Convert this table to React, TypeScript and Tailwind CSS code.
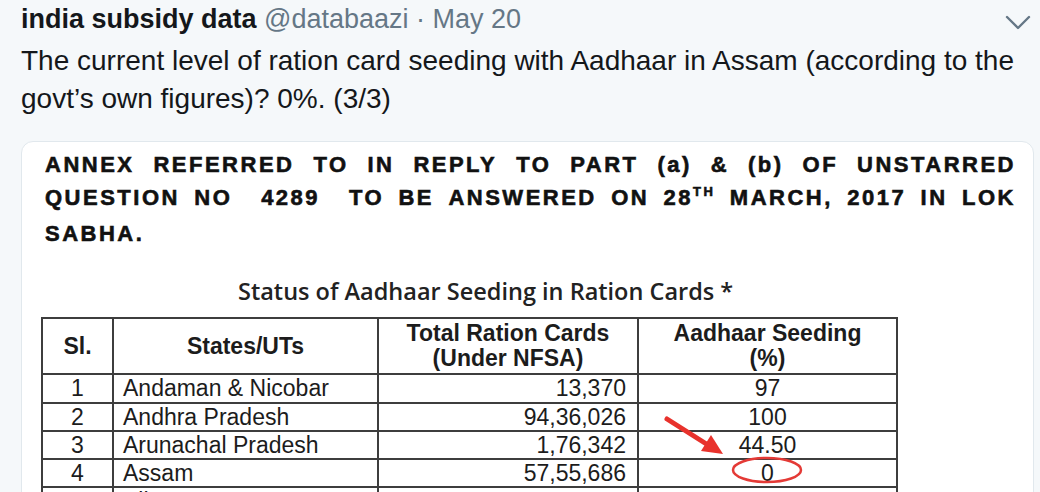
import React from 'react';

const annexLines = [
  ['ANNEX', 'REFERRED', 'TO', 'IN', 'REPLY', 'TO', 'PART', '(a)', '&', '(b)', 'OF', 'UNSTARRED'],
  ['QUESTION', 'NO', '', '4289', '', 'TO', 'BE', 'ANSWERED', 'ON', '28TH', 'MARCH,', '2017', 'IN', 'LOK'],
];

const rows = [
  { sl: '1', state: 'Andaman & Nicobar', total: '13,370', seed: '97', h: 'h-[29px]' },
  { sl: '2', state: 'Andhra Pradesh', total: '94,36,026', seed: '100', h: 'h-[28px]' },
  { sl: '3', state: 'Arunachal Pradesh', total: '1,76,342', seed: '44.50', h: 'h-[28px]' },
  { sl: '4', state: 'Assam', total: '57,55,686', seed: '0', h: 'h-[28px]' },
  { sl: '5', state: 'Bihar', total: '1,54,34,000', seed: '46.87', h: 'h-[28px]' },
];

const Word: React.FC<{ w: string }> = ({ w }) => {
  if (w === '') return <span />;
  if (w === '28TH') {
    return (
      <span>
        28<span className="text-[13px] relative top-[-9px]">TH</span>
      </span>
    );
  }
  return <span>{w}</span>;
};

const App: React.FC = () => {
  return (
    <div
      className="w-[1040px] h-[492px] overflow-hidden bg-[#f5f8fa] pl-[21px] pr-[6px]"
      style={{ fontFamily: '"Liberation Sans", Arial, sans-serif' }}
    >
      {/* Tweet header */}
      <div className="flex items-start justify-between">
        <div className="text-[27px] leading-[38px]">
          <span className="font-bold text-[#14171a]">india subsidy data</span>
          <span className="text-[#657786]"> @databaazi · May 20</span>
        </div>
        <svg width="26" height="16" viewBox="0 0 26 16" className="mt-[15px] mr-[3px]">
          <polyline
            points="2,2 13,13 24,2"
            fill="none"
            stroke="#657786"
            strokeWidth="2.4"
            strokeLinecap="round"
            strokeLinejoin="round"
          />
        </svg>
      </div>

      {/* Tweet body */}
      <p className="mt-[4px] text-[28px] leading-[38px] text-[#14171a] pr-[6px]">
        The current level of ration card seeding with Aadhaar in Assam (according to the govt’s own figures)? 0%. (3/3)
      </p>

      {/* Attached image card */}
      <div className="mt-[23px] w-[1013px] h-[400px] bg-white border border-[#e1e8ed] rounded-t-[12px] overflow-hidden">
        {/* Annex heading */}
        <div className="pl-[23px] pr-[17px] pt-[6px] text-[22px] font-bold text-[#111] tracking-[2.5px] leading-[33px] [-webkit-text-stroke:0.6px_#111]">
          {annexLines.map((line, i) => (
            <div key={i} className="flex justify-between">
              {line.map((w, j) => (
                <Word key={j} w={w} />
              ))}
            </div>
          ))}
          <div>SABHA.</div>
        </div>

        {/* Table title */}
        <div
          className="mt-[26px] ml-[216px] text-[23.5px] font-semibold text-[#222] leading-[30px]"
          style={{ fontFamily: '"Open Sans", "Liberation Sans", sans-serif' }}
        >
          Status of Aadhaar Seeding in Ration Cards *
        </div>

        {/* Table */}
        <div className="relative ml-[19px] mt-[11px] w-[857px]">
          <table className="border-collapse text-[23px] text-[#1c1c1c] leading-none">
            <thead>
              <tr className="h-[56px] font-bold">
                <th className="w-[71px] border-2 border-[#3d3d3d] text-center font-bold">Sl.</th>
                <th className="w-[265px] border-2 border-[#3d3d3d] text-center font-bold">States/UTs</th>
                <th className="w-[260px] border-2 border-[#3d3d3d] text-center font-bold leading-[25px]">
                  Total Ration Cards
                  <br />
                  (Under NFSA)
                </th>
                <th className="w-[259px] border-2 border-[#3d3d3d] text-center font-bold leading-[25px]">
                  Aadhaar Seeding
                  <br />
                  (%)
                </th>
              </tr>
            </thead>
            <tbody>
              {rows.map((r) => (
                <tr key={r.sl} className={r.h}>
                  <td className="border-2 border-[#3d3d3d] text-center">{r.sl}</td>
                  <td className="border-2 border-[#3d3d3d] pl-[9px]">{r.state}</td>
                  <td className="border-2 border-[#3d3d3d] text-right pr-[11px]">{r.total}</td>
                  <td className="border-2 border-[#3d3d3d] text-center">{r.seed}</td>
                </tr>
              ))}
            </tbody>
          </table>

          {/* Red annotation */}
          <svg
            className="absolute left-0 top-0 pointer-events-none"
            width="857"
            height="200"
            viewBox="0 0 857 200"
          >
            <line x1="626" y1="102" x2="667" y2="128" stroke="#e8322c" strokeWidth="5" strokeLinecap="round" />
            <polygon points="682,137 660,134 670,118" fill="#e8322c" />
            <ellipse cx="726" cy="153" rx="34" ry="12" fill="none" stroke="#e43a36" strokeWidth="2.5" />
          </svg>
        </div>
      </div>
    </div>
  );
};

export default App;
